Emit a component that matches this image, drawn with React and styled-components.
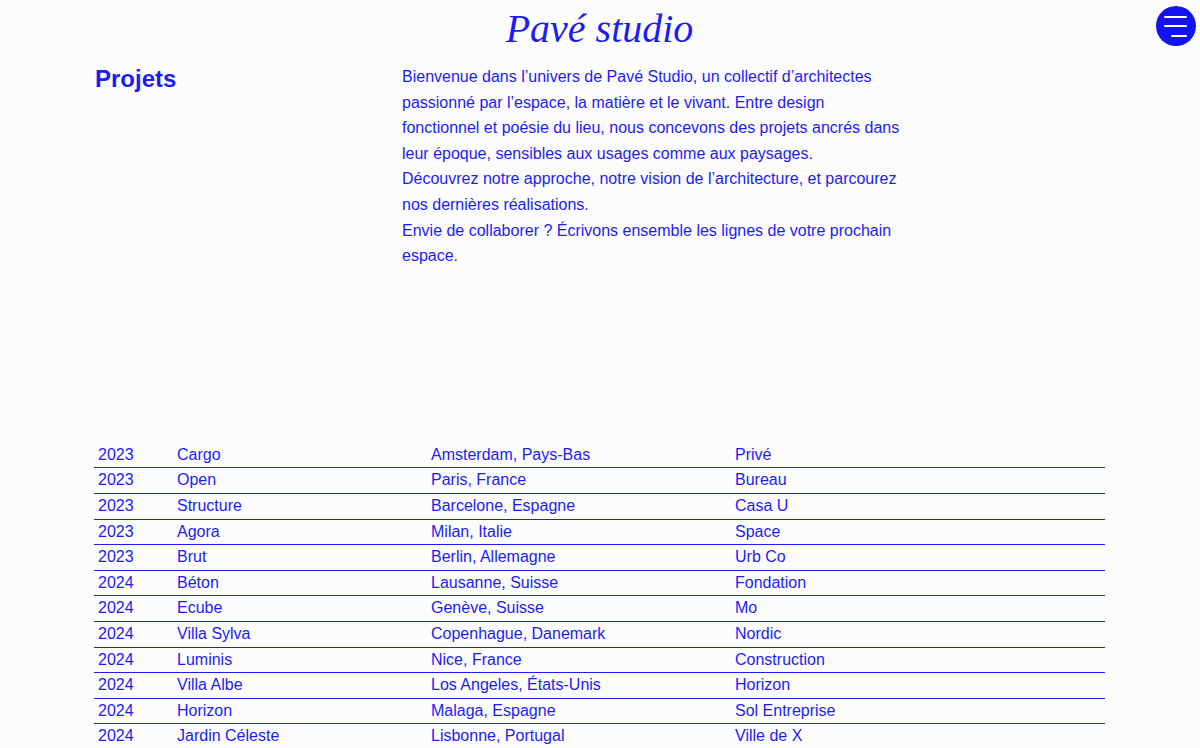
import React from "react";
import styled, { createGlobalStyle } from "styled-components";

const BLUE = "#1c1cf5";

const Global = createGlobalStyle`
  html, body { margin: 0; padding: 0; background: #fcfcfd; }
  body { font-family: "Liberation Sans", Arial, sans-serif; color: ${BLUE}; }
  * { box-sizing: border-box; }
`;

const Page = styled.div`
  padding: 0 95px 0 94px;
`;

const Header = styled.header`
  display: flex;
  justify-content: center;
  padding-top: 6px;
`;

const Title = styled.h1`
  margin: 0;
  font-family: "Liberation Serif", "Times New Roman", serif;
  font-style: italic;
  font-weight: 400;
  font-size: 40px;
  line-height: 46px;
  color: ${BLUE};
`;

const MenuButton = styled.button`
  position: fixed;
  top: 6px;
  right: 4px;
  width: 40px;
  height: 40px;
  border: 0;
  border-radius: 50%;
  background: #1313f2;
  padding: 0;
  display: flex;
  flex-direction: column;
  align-items: flex-end;
  justify-content: center;
  gap: 7.5px;
  padding-right: 9px;
  cursor: pointer;
`;

const MenuLine = styled.span`
  display: block;
  height: 2px;
  width: ${(p) => (p.$short ? 16 : 23)}px;
  background: #fff;
  border-radius: 1px;
`;

const Intro = styled.section`
  display: grid;
  grid-template-columns: 308px 498px;
  margin-top: 12px;
`;

const SectionTitle = styled.h2`
  margin: 1px 0 0 1px;
  font-size: 24px;
  line-height: 1.15;
  font-weight: 700;
  color: ${BLUE};
`;

const Text = styled.div`
  font-size: 16px;
  line-height: 25.6px;
`;

const Para = styled.p`
  margin: 0;
`;

const Table = styled.div`
  margin-top: 174px;
  display: flex;
  flex-direction: column;
`;

const Row = styled.div`
  display: grid;
  grid-template-columns: 79px 254px 304px 1fr;
  border-bottom: 1px solid ${BLUE};
  font-size: 16px;
  line-height: 24.6px;
`;

const Cell = styled.div`
  padding-left: 4px;
  white-space: nowrap;
`;

const projects = [
  ["2023", "Cargo", "Amsterdam, Pays-Bas", "Privé"],
  ["2023", "Open", "Paris, France", "Bureau"],
  ["2023", "Structure", "Barcelone, Espagne", "Casa U"],
  ["2023", "Agora", "Milan, Italie", "Space"],
  ["2023", "Brut", "Berlin, Allemagne", "Urb Co"],
  ["2024", "Béton", "Lausanne, Suisse", "Fondation"],
  ["2024", "Ecube", "Genève, Suisse", "Mo"],
  ["2024", "Villa Sylva", "Copenhague, Danemark", "Nordic"],
  ["2024", "Luminis", "Nice, France", "Construction"],
  ["2024", "Villa Albe", "Los Angeles, États-Unis", "Horizon"],
  ["2024", "Horizon", "Malaga, Espagne", "Sol Entreprise"],
  ["2024", "Jardin Céleste", "Lisbonne, Portugal", "Ville de X"],
];

export default function App() {
  return (
    <>
      <Global />
      <MenuButton aria-label="Menu">
        <MenuLine />
        <MenuLine />
        <MenuLine $short />
      </MenuButton>
      <Page>
        <Header>
          <Title>Pavé studio</Title>
        </Header>
        <Intro>
          <SectionTitle>Projets</SectionTitle>
          <Text>
            <Para>
              Bienvenue dans l’univers de Pavé Studio, un collectif d’architectes
              passionné par l’espace, la matière et le vivant. Entre design
              fonctionnel et poésie du lieu, nous concevons des projets ancrés dans
              leur époque, sensibles aux usages comme aux paysages.
            </Para>
            <Para>
              Découvrez notre approche, notre vision de l’architecture, et parcourez
              nos dernières réalisations.
            </Para>
            <Para>
              Envie de collaborer ? Écrivons ensemble les lignes de votre prochain
              espace.
            </Para>
          </Text>
        </Intro>
        <Table>
          {projects.map((p, i) => (
            <Row key={i}>
              {p.map((c, j) => (
                <Cell key={j}>{c}</Cell>
              ))}
            </Row>
          ))}
        </Table>
      </Page>
    </>
  );
}
